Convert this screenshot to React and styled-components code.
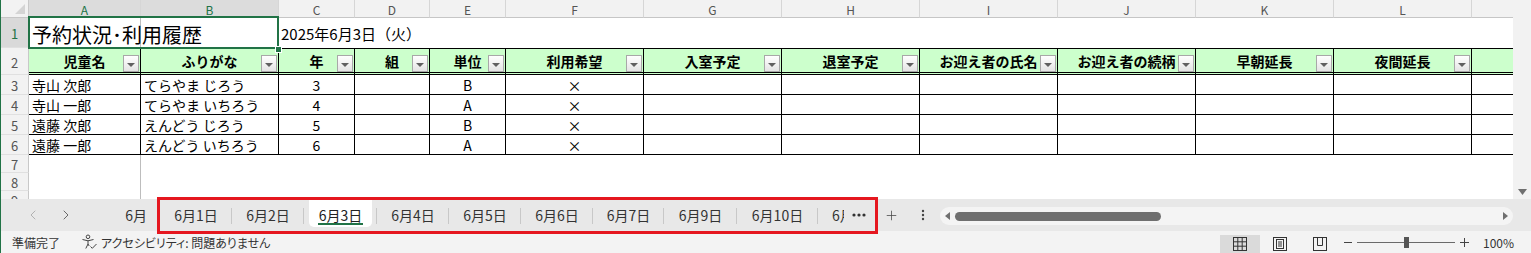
import React from "react";
import styled, { createGlobalStyle } from "styled-components";
import { ChevronLeft, ChevronRight, Plus } from "lucide-react";

const GREEN = "#217346";
const JP = `"Noto Sans CJK JP", "Noto Sans", sans-serif`;

const GlobalStyle = createGlobalStyle`
  html, body {
    margin: 0;
    padding: 0;
    background: #ffffff;
  }
  body {
    font-family: ${JP};
    color: #000;
  }
`;

// M is only a sliver at the right edge, its letter and right border sit out of view
const columns = [
  { key: "A", w: 112, head: "児童名", align: "left" },
  { key: "B", w: 138, head: "ふりがな", align: "left" },
  { key: "C", w: 76, head: "年" },
  { key: "D", w: 75, head: "組" },
  { key: "E", w: 76, head: "単位" },
  { key: "F", w: 138, head: "利用希望" },
  { key: "G", w: 138, head: "入室予定" },
  { key: "H", w: 138, head: "退室予定" },
  { key: "I", w: 138, head: "お迎え者の氏名" },
  { key: "J", w: 138, head: "お迎え者の続柄" },
  { key: "K", w: 138, head: "早朝延長" },
  { key: "L", w: 138, head: "夜間延長" },
  { key: "M", w: 60, head: "", noFilter: true, hideLetter: true },
];

const children = [
  ["寺山 次郎", "てらやま じろう", "3", "", "B", "×"],
  ["寺山 一郎", "てらやま いちろう", "4", "", "A", "×"],
  ["遠藤 次郎", "えんどう じろう", "5", "", "B", "×"],
  ["遠藤 一郎", "えんどう いちろう", "6", "", "A", "×"],
];

const sheetTabs = [
  { name: "6月1日", w: 72 },
  { name: "6月2日", w: 72 },
  { name: "6月3日", w: 73, active: true },
  { name: "6月4日", w: 72 },
  { name: "6月5日", w: 72 },
  { name: "6月6日", w: 72 },
  { name: "6月7日", w: 71 },
  { name: "6月9日", w: 73 },
  { name: "6月10日", w: 81 },
];

function App() {
  return (
    <Frame>
      <GlobalStyle />
      <SheetArea>
        <Grid>
          <Row $h={18}>
            <Corner />
            {columns.map((c) => (
              <ColHead key={c.key} $w={c.w} $sel={c.key === "A" || c.key === "B"}>
                {c.hideLetter ? "" : c.key}
              </ColHead>
            ))}
          </Row>

          <Row $h={30}>
            <RowHead $sel>1</RowHead>
            <TitleCell $w={112}>予約状況･利用履歴</TitleCell>
            <BlankCell $w={138} />
            <DateCell $w={76}>2025年6月3日（火）</DateCell>
            {columns.slice(3).map((c) => (
              <BlankCell key={c.key} $w={c.w} />
            ))}
          </Row>

          <Row $h={27}>
            <RowHead>2</RowHead>
            {columns.map((c) => (
              <HeadCell key={c.key} $w={c.w}>
                {c.head}
                {!c.noFilter && <FilterBtn />}
              </HeadCell>
            ))}
          </Row>

          {children.map((r, i) => (
            <Row key={i} $h={20}>
              <RowHead>{i + 3}</RowHead>
              {columns.map((c, j) => (
                <Cell key={c.key} $w={c.w} $align={c.align}>
                  {r[j] || ""}
                </Cell>
              ))}
            </Row>
          ))}

          {[7, 8, 9].map((n) => (
            <Row key={n} $h={18}>
              <RowHead>{n}</RowHead>
              {columns.map((c) => (
                <BlankCell key={c.key} $w={c.w} $freeze={c.key === "A"} />
              ))}
            </Row>
          ))}

          <Selection>
            <FillHandle />
          </Selection>
        </Grid>
        <VScroll>
          <svg width="9" height="6" viewBox="0 0 9 6">
            <path d="M0 0 H9 L4.5 6 Z" fill="#6f6f6f" />
          </svg>
        </VScroll>
      </SheetArea>

      <TabBar>
        <Nav>
          <NavBtn $dim>
            <ChevronLeft size={16} strokeWidth={1.3} />
          </NavBtn>
          <NavBtn>
            <ChevronRight size={16} strokeWidth={1.3} />
          </NavBtn>
        </Nav>
        <FirstTab>6月</FirstTab>
        {sheetTabs.map((t) => (
          <Tab key={t.name} $w={t.w}>
            {t.active && <ActiveFace />}
            <TabLabel $active={t.active}>{t.name}</TabLabel>
          </Tab>
        ))}
        <PartialTab>6月</PartialTab>
        <BarBtn $w={30}>
          <svg width="14" height="4" viewBox="0 0 14 4">
            <circle cx="2" cy="2" r="1.6" fill="#333" />
            <circle cx="7" cy="2" r="1.6" fill="#333" />
            <circle cx="12" cy="2" r="1.6" fill="#333" />
          </svg>
        </BarBtn>
        <BarBtn $w={22} $ml={6}>
          <Plus size={15} strokeWidth={1.2} color="#444" />
        </BarBtn>
        <BarBtn $w={22} $ml={10}>
          <svg width="4" height="14" viewBox="0 0 4 14">
            <circle cx="2" cy="3" r="1.2" fill="#444" />
            <circle cx="2" cy="7" r="1.2" fill="#444" />
            <circle cx="2" cy="11" r="1.2" fill="#444" />
          </svg>
        </BarBtn>
        <HScroll>
          <svg width="5" height="8" viewBox="0 0 5 8">
            <path d="M5 0 V8 L0 4 Z" fill="#6f6f6f" />
          </svg>
          <Thumb />
          <svg width="5" height="8" viewBox="0 0 5 8" style={{ marginLeft: "auto" }}>
            <path d="M0 0 V8 L5 4 Z" fill="#6f6f6f" />
          </svg>
        </HScroll>
        <RedBox />
      </TabBar>

      <StatusBar>
        <StatusText>準備完了</StatusText>
        <A11y>
          <svg width="17" height="16" viewBox="0 0 17 16" fill="none" stroke="#444" strokeWidth="1">
            <circle cx="7" cy="2.8" r="1.8" />
            <path d="M1.5 5.5 L7 6.8 L12.5 5.5" />
            <path d="M7 6.8 V10 L4.8 14.5" />
            <path d="M7 10 L8.2 12" />
            <path d="M9.5 12.5 L11.3 14.3 L15.5 10" />
          </svg>
          <StatusText>アクセシビリティ: 問題ありません</StatusText>
        </A11y>
        <StatusRight>
          <ViewBtn $active>
            <svg width="14" height="14" viewBox="0 0 14 14" fill="none" stroke="#333" strokeWidth="1">
              <rect x="0.5" y="0.5" width="13" height="13" />
              <path d="M4.8 0.5 V13.5 M9.2 0.5 V13.5 M0.5 4.8 H13.5 M0.5 9.2 H13.5" />
            </svg>
          </ViewBtn>
          <ViewBtn>
            <svg width="14" height="14" viewBox="0 0 14 14" fill="none" stroke="#333" strokeWidth="1">
              <rect x="0.5" y="0.5" width="13" height="13" />
              <rect x="3.5" y="2.5" width="7" height="9" />
              <path d="M5 5 H9 M5 7 H9 M5 9 H9" />
            </svg>
          </ViewBtn>
          <ViewBtn>
            <svg width="14" height="14" viewBox="0 0 14 14" fill="none" stroke="#333" strokeWidth="1">
              <rect x="0.5" y="0.5" width="13" height="13" />
              <path d="M4.5 0.5 V8.5 H9.5 V0.5" />
            </svg>
          </ViewBtn>
          <ZoomSign>
            <svg width="8" height="8" viewBox="0 0 8 8" stroke="#444" strokeWidth="1">
              <path d="M0 4.5 H8" />
            </svg>
          </ZoomSign>
          <Slider>
            <SliderThumb />
          </Slider>
          <ZoomSign>
            <svg width="9" height="9" viewBox="0 0 9 9" stroke="#444" strokeWidth="1">
              <path d="M0 4.5 H9 M4.5 0 V9" />
            </svg>
          </ZoomSign>
          <ZoomPct>100%</ZoomPct>
        </StatusRight>
      </StatusBar>
    </Frame>
  );
}

const Frame = styled.div`
  width: 1531px;
  height: 253px;
  box-sizing: border-box;
  border-left: 1px solid ${GREEN};
  display: flex;
  flex-direction: column;
  overflow: hidden;
  position: relative;
  background: #fff;
`;

const SheetArea = styled.div`
  display: flex;
  height: 199px;
  flex-shrink: 0;
`;

const Grid = styled.div`
  flex: 1;
  min-width: 0;
  position: relative;
  overflow: hidden;
  display: flex;
  flex-direction: column;
`;

const Row = styled.div`
  display: flex;
  flex-shrink: 0;
  height: ${(p) => p.$h}px;
`;

const RowHead = styled.div`
  flex: 0 0 28px;
  min-width: 0;
  box-sizing: border-box;
  display: flex;
  align-items: center;
  justify-content: center;
  padding-top: 2px;
  background: ${(p) => (p.$sel ? "#d9d9d9" : "#f2f2f2")};
  color: ${(p) => (p.$sel ? GREEN : "#555")};
  border-right: 1px solid #c8c8c8;
  border-bottom: 1px solid #e0e0e0;
  font-size: 13px;
`;

const Corner = styled(RowHead)`
  position: relative;
  border-bottom: 1px solid #c6c6c6;

  &::after {
    content: "";
    position: absolute;
    right: 3px;
    bottom: 3px;
    border-left: 10px solid transparent;
    border-bottom: 10px solid #d4d4d4;
  }
`;

const ColHead = styled.div`
  flex: 0 0 ${(p) => p.$w}px;
  min-width: 0;
  box-sizing: border-box;
  display: flex;
  justify-content: center;
  align-items: center;
  padding-top: 2px;
  background: ${(p) => (p.$sel ? "#dcdcdc" : "#f2f2f2")};
  color: ${(p) => (p.$sel ? GREEN : "#555")};
  border-right: 1px solid #d6d6d6;
  border-bottom: 1px solid #c6c6c6;
  font-size: 12px;
`;

const BlankCell = styled.div`
  flex: 0 0 ${(p) => p.$w}px;
  min-width: 0;
  box-sizing: border-box;
  border-right: ${(p) => (p.$freeze ? "1px solid #bdbdbd" : "none")};
`;

const TitleCell = styled.div`
  flex: 0 0 ${(p) => p.$w}px;
  min-width: 0;
  box-sizing: border-box;
  display: flex;
  align-items: flex-end;
  padding: 0 0 0 3px;
  border-right: 1px solid #bdbdbd;
  font-size: 20px;
  line-height: 26px;
  white-space: nowrap;
`;

const DateCell = styled.div`
  flex: 0 0 ${(p) => p.$w}px;
  min-width: 0;
  box-sizing: border-box;
  display: flex;
  align-items: flex-end;
  padding: 0 0 4px 2px;
  font-size: 15px;
  line-height: 20px;
  white-space: nowrap;
`;

const Cell = styled.div`
  flex: 0 0 ${(p) => p.$w}px;
  min-width: 0;
  box-sizing: border-box;
  display: flex;
  align-items: center;
  justify-content: ${(p) => (p.$align === "left" ? "flex-start" : "center")};
  padding: 0 3px;
  font-size: 14px;
  white-space: nowrap;
  background: #fff;
  border-right: 1px solid #000;
  border-bottom: 1px solid #000;
`;

const HeadCell = styled(Cell)`
  position: relative;
  justify-content: center;
  background: #ccffcc;
  font-weight: 700;
  border-top: 1px solid #000;
  border-bottom: 3px double #000;
`;

const FilterBtn = styled.span`
  position: absolute;
  right: 1px;
  bottom: 0;
  width: 16px;
  height: 17px;
  box-sizing: border-box;
  border: 1px solid #a8a8a8;
  background: linear-gradient(#ffffff, #e4e4e4);

  &::after {
    content: "";
    position: absolute;
    left: 3px;
    top: 7px;
    border-left: 4px solid transparent;
    border-right: 4px solid transparent;
    border-top: 4px solid #606060;
  }
`;

const Selection = styled.div`
  position: absolute;
  left: 27px;
  top: 16px;
  width: 251px;
  height: 33px;
  box-sizing: border-box;
  border: 2px solid ${GREEN};
  pointer-events: none;
`;

const FillHandle = styled.span`
  position: absolute;
  left: 245px;
  top: 28px;
  width: 7px;
  height: 7px;
  box-sizing: border-box;
  background: ${GREEN};
  border: 1px solid #fff;
`;

const VScroll = styled.div`
  flex: 0 0 18px;
  background: #f2f2f2;
  display: flex;
  flex-direction: column;
  justify-content: flex-end;
  align-items: center;
  padding-bottom: 4px;
  box-sizing: border-box;
`;

const TabBar = styled.div`
  height: 32px;
  flex-shrink: 0;
  display: flex;
  align-items: stretch;
  background: #e8e8e8;
  position: relative;
  font-size: 14px;
  color: #333;
`;

const Nav = styled.div`
  flex: 0 0 104px;
  box-sizing: border-box;
  display: flex;
  padding-left: 15px;
`;

const NavBtn = styled.div`
  width: 33px;
  display: flex;
  align-items: center;
  justify-content: center;
  color: ${(p) => (p.$dim ? "#a8a8a8" : "#555")};
`;

const FirstTab = styled.div`
  flex: 0 0 55px;
  box-sizing: border-box;
  display: flex;
  align-items: center;
  justify-content: flex-end;
  padding-right: 13px;
`;

const Tab = styled.div`
  flex: 0 0 ${(p) => p.$w}px;
  position: relative;
  display: flex;
  align-items: center;
  justify-content: center;

  &::after {
    content: "";
    position: absolute;
    right: 0;
    top: 9px;
    width: 1px;
    height: 16px;
    background: #c8c8c8;
  }
`;

const ActiveFace = styled.span`
  position: absolute;
  left: 5px;
  right: 5px;
  top: 0;
  bottom: 4px;
  background: #fff;
  border-radius: 0 0 5px 5px;
`;

const TabLabel = styled.span`
  position: relative;
  line-height: 16px;
  padding: 0 1px;
  margin-top: ${(p) => (p.$active ? "1px" : "0")};
  border-bottom: ${(p) => (p.$active ? `2px solid ${GREEN}` : "none")};
  color: ${(p) => (p.$active ? "#222" : "#333")};
`;

const PartialTab = styled.div`
  flex: 0 0 26px;
  box-sizing: border-box;
  overflow: hidden;
  white-space: nowrap;
  display: flex;
  align-items: center;
  padding-left: 14px;
`;

const BarBtn = styled.div`
  flex: 0 0 ${(p) => p.$w}px;
  margin-left: ${(p) => p.$ml || 0}px;
  display: flex;
  align-items: center;
  justify-content: center;
`;

const HScroll = styled.div`
  flex: 1;
  margin: 8px 18px 6px 6px;
  background: #f4f4f4;
  border-radius: 9px;
  display: flex;
  align-items: center;
  padding: 0 5px;
`;

const Thumb = styled.div`
  width: 206px;
  height: 9px;
  margin-left: 5px;
  border-radius: 5px;
  background: #6f6f6f;
`;

const RedBox = styled.div`
  position: absolute;
  left: 156px;
  top: -2px;
  width: 721px;
  height: 37px;
  box-sizing: border-box;
  border: 3px solid #e5171f;
  pointer-events: none;
  z-index: 2;
`;

const StatusBar = styled.div`
  height: 22px;
  flex-shrink: 0;
  display: flex;
  align-items: center;
  background: #f3f3f3;
  padding-left: 11px;
  font-size: 12px;
  color: #333;
`;

const StatusText = styled.span`
  font-feature-settings: "palt";
  white-space: nowrap;
`;

const A11y = styled.div`
  display: flex;
  align-items: center;
  gap: 3px;
  margin-left: 21px;
`;

const StatusRight = styled.div`
  margin-left: auto;
  height: 100%;
  display: flex;
  align-items: center;
  padding-right: 14px;
`;

const ViewBtn = styled.div`
  width: 40px;
  height: 18px;
  align-self: flex-end;
  display: flex;
  align-items: center;
  justify-content: center;
  background: ${(p) => (p.$active ? "#dadada" : "transparent")};
`;

const ZoomSign = styled.div`
  width: 16px;
  display: flex;
  justify-content: center;
  align-items: center;
`;

const Slider = styled.div`
  width: 100px;
  height: 11px;
  position: relative;

  &::before {
    content: "";
    position: absolute;
    left: 1px;
    right: 1px;
    top: 5px;
    height: 1px;
    background: #6a6a6a;
  }
`;

const SliderThumb = styled.span`
  position: absolute;
  left: 48px;
  top: 0;
  width: 5px;
  height: 11px;
  background: #555;
`;

const ZoomPct = styled.div`
  width: 34px;
  margin-left: 11px;
  font-size: 12px;
`;

export default App;
